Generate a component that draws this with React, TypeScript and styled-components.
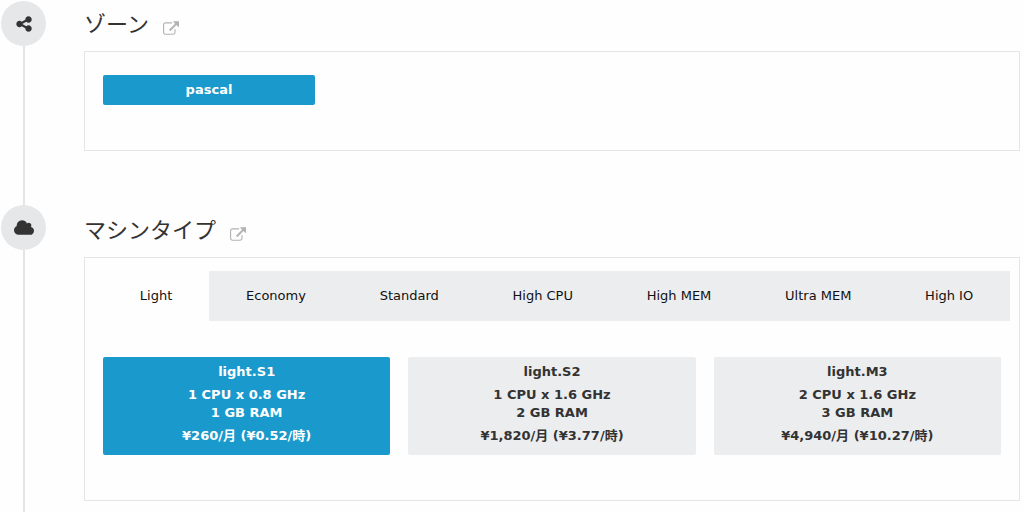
import React, { useState } from "react";
import styled, { createGlobalStyle } from "styled-components";

const blue = "#1999cc";
const grey = "#ecedef";
const line = "#e4e5e6";

const GlobalStyle = createGlobalStyle`
  * { box-sizing: border-box; }
  body {
    margin: 0;
    background: #fefefe;
    color: #333;
    font: 13px/18px "DejaVu Sans", "Noto Sans CJK JP", sans-serif;
  }
  button { font: inherit; cursor: pointer; }
`;

const Page = styled.main`
  display: flex;
  flex-direction: column;
  min-height: 100vh;
  padding: 1px 4px 0 1px;
`;

const Section = styled.section<{ $grow?: boolean }>`
  display: flex;
  flex-grow: ${(p) => (p.$grow ? 1 : 0)};
  gap: 38px;
`;

const Rail = styled.div`
  display: flex;
  flex-direction: column;
  align-items: center;
  flex: none;
  width: 45px;

  &::after {
    content: "";
    flex: 1;
    width: 2px;
    background: ${line};
  }
`;

const Marker = styled.div`
  display: flex;
  align-items: center;
  justify-content: center;
  width: 45px;
  height: 45px;
  border-radius: 50%;
  background: #e6e7e8;
  color: #333;
`;

const Body = styled.div<{ $last?: boolean }>`
  flex: 1;
  min-width: 0;
  padding-top: ${(p) => (p.$last ? 2 : 0)}px;
  padding-bottom: ${(p) => (p.$last ? 11 : 54)}px;
`;

const Heading = styled.header`
  display: flex;
  align-items: center;
  gap: 14px;
  height: 50px;
  padding-bottom: 8px;
`;

const Title = styled.h2`
  margin: 0;
  font: 400 22px/32px "Noto Sans CJK JP", sans-serif;
`;

const HelpLink = styled.a`
  display: flex;
  padding-top: 12px;
  color: #b3b3b3;
`;

const Panel = styled.div`
  border: 1px solid ${line};
`;

const ZoneList = styled.div`
  display: flex;
  gap: 18px;
  padding: 23px 18px 45px;
`;

const ZoneButton = styled.button`
  width: 212px;
  height: 30px;
  padding: 0;
  border: 0;
  border-radius: 2px;
  background: ${blue};
  color: #fff;
  && { font-weight: bold; }
`;

const Tabs = styled.div`
  display: flex;
  padding: 13px 9px 0 18px;
`;

const Tab = styled.button<{ $active: boolean }>`
  flex: 1 1 auto;
  height: 50px;
  padding: 0;
  border: 0;
  background: ${(p) => (p.$active ? "transparent" : grey)};
  color: #111;
  white-space: nowrap;
`;

const Plans = styled.div`
  display: grid;
  grid-template-columns: repeat(3, 1fr);
  gap: 18px;
  padding: 36px 18px 45px;
`;

const Plan = styled.button<{ $selected: boolean }>`
  display: flex;
  flex-direction: column;
  align-items: center;
  gap: 5px;
  padding: 6px 8px 10px;
  border: 0;
  border-radius: 2px;
  background: ${(p) => (p.$selected ? blue : grey)};
  color: ${(p) => (p.$selected ? "#fff" : "#333")};
  && { font-weight: bold; }
`;

const ShareIcon = () => (
  <svg width="16" height="18" viewBox="0 0 1536 1792" fill="currentColor" aria-hidden="true">
    <path d="M1216 1024q133 0 226.500 93.500t93.500 226.500-93.500 226.500-226.500 93.500-226.500-93.500-93.500-226.500q0-12 2-34l-360-180q-92 86-218 86-133 0-226.500-93.500t-93.500-226.500 93.500-226.500 226.500-93.500q126 0 218 86l360-180q-2-22-2-34 0-133 93.500-226.500t226.500-93.500 226.500 93.500 93.500 226.500-93.500 226.500-226.500 93.500q-126 0-218-86l-360 180q2 22 2 34t-2 34l360 180q92-86 218-86z" />
  </svg>
);

const CloudIcon = () => (
  <svg width="20" height="15" viewBox="64 128 1920 1408" fill="currentColor" aria-hidden="true">
    <path d="M1984 1152q0 159-112.500 271.500t-271.500 112.500h-1088q-185 0-316.500-131.500t-131.500-316.500q0-132 71-241.500t187-163.500q-2-28-2-43 0-212 150-362t362-150q158 0 286.500 88t187.500 230q70-62 166-62 106 0 181 75t75 181q0 75-41 138 129 30 213 134.500t84 239.500z" />
  </svg>
);

const ExternalIcon = () => (
  <svg width="16" height="14" viewBox="0 0 1792 1536" fill="currentColor" aria-hidden="true">
    <path d="M1408 928v320q0 119-84.500 203.500t-203.500 84.500h-832q-119 0-203.500-84.500t-84.500-203.500v-832q0-119 84.500-203.500t203.500-84.500h704q14 0 23 9t9 23v64q0 14-9 23t-23 9h-704q-66 0-113 47t-47 113v832q0 66 47 113t113 47h832q66 0 113-47t47-113v-320q0-14 9-23t23-9h64q14 0 23 9t9 23zm384-864v512q0 26-19 45t-45 19-45-19l-176-176-652 652q-10 10-23 10t-23-10l-114-114q-10-10-10-23t10-23l652-652-176-176q-19-19-19-45t19-45 45-19h512q26 0 45 19t19 45z" />
  </svg>
);

const families = ["Light", "Economy", "Standard", "High CPU", "High MEM", "Ultra MEM", "High IO"];

const plans = [
  { name: "light.S1", cpu: "1 CPU x 0.8 GHz", ram: "1 GB RAM", price: "¥260/月 (¥0.52/時)" },
  { name: "light.S2", cpu: "1 CPU x 1.6 GHz", ram: "2 GB RAM", price: "¥1,820/月 (¥3.77/時)" },
  { name: "light.M3", cpu: "2 CPU x 1.6 GHz", ram: "3 GB RAM", price: "¥4,940/月 (¥10.27/時)" },
];

export default function App() {
  const [family, setFamily] = useState("Light");
  const [plan, setPlan] = useState("light.S1");

  return (
    <>
      <GlobalStyle />
      <Page lang="ja">
        <Section>
          <Rail>
            <Marker><ShareIcon /></Marker>
          </Rail>
          <Body>
            <Heading>
              <Title>ゾーン</Title>
              <HelpLink href="#zone" aria-label="ゾーン"><ExternalIcon /></HelpLink>
            </Heading>
            <Panel>
              <ZoneList>
                <ZoneButton type="button" aria-pressed="true">pascal</ZoneButton>
              </ZoneList>
            </Panel>
          </Body>
        </Section>
        <Section $grow>
          <Rail>
            <Marker><CloudIcon /></Marker>
          </Rail>
          <Body $last>
            <Heading>
              <Title>マシンタイプ</Title>
              <HelpLink href="#machine-type" aria-label="マシンタイプ"><ExternalIcon /></HelpLink>
            </Heading>
            <Panel>
              <Tabs role="tablist">
                {families.map((name) => (
                  <Tab
                    key={name}
                    type="button"
                    role="tab"
                    aria-selected={family === name}
                    $active={family === name}
                    onClick={() => setFamily(name)}
                  >
                    {name}
                  </Tab>
                ))}
              </Tabs>
              <Plans>
                {plans.map((p) => (
                  <Plan
                    key={p.name}
                    type="button"
                    aria-pressed={plan === p.name}
                    $selected={plan === p.name}
                    onClick={() => setPlan(p.name)}
                  >
                    <span>{p.name}</span>
                    <span>
                      {p.cpu}
                      <br />
                      {p.ram}
                    </span>
                    <span>{p.price}</span>
                  </Plan>
                ))}
              </Plans>
            </Panel>
          </Body>
        </Section>
      </Page>
    </>
  );
}
